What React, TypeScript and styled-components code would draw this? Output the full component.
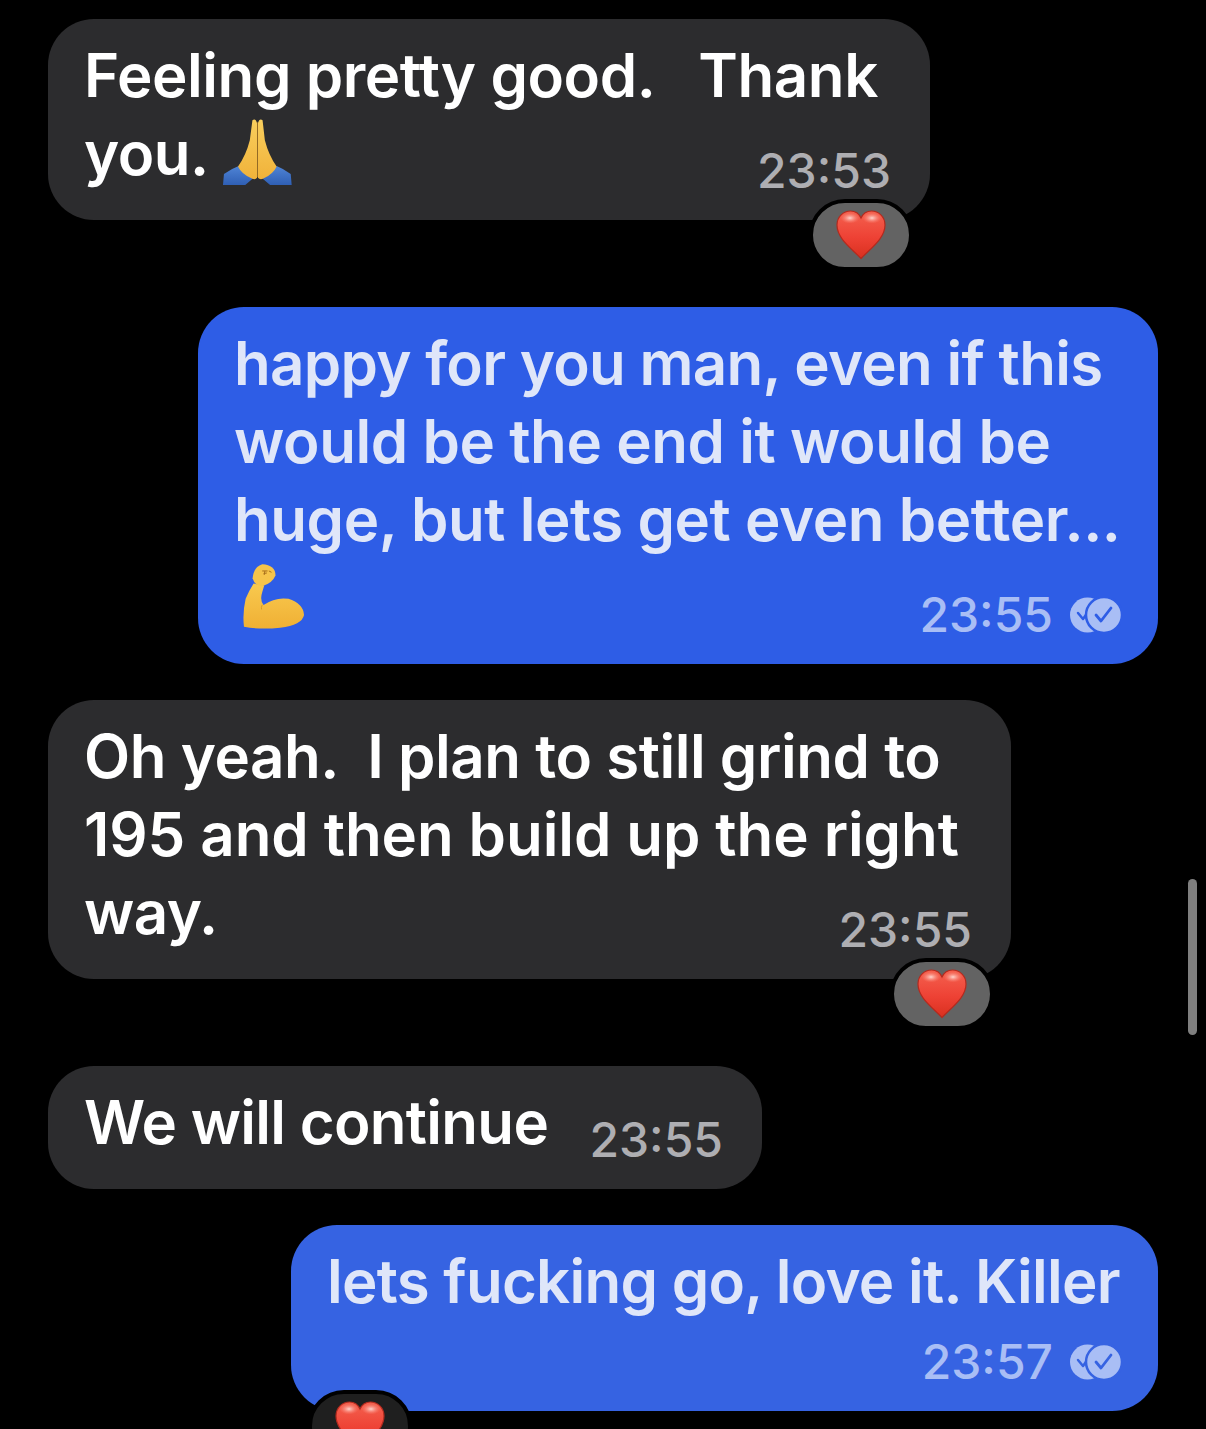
import React, { useId } from "react";
import styled, { createGlobalStyle } from "styled-components";

const Global = createGlobalStyle`
  html, body { margin: 0; padding: 0; background: #000; }
  body { width: 1206px; height: 1429px; overflow: hidden; }
`;

const Page = styled.main`
  position: relative;
  box-sizing: border-box;
  width: 1206px;
  height: 1429px;
  overflow: hidden;
  padding: 19px 48px 0;
  display: flex;
  flex-direction: column;
  background: #000;
  font-family: Inter, "Liberation Sans", sans-serif;
`;

const Bubble = styled.div<{ $w: number; $out?: boolean; $bg?: string; $gap: number }>`
  position: relative;
  box-sizing: border-box;
  width: ${(p) => p.$w}px;
  align-self: ${(p) => (p.$out ? "flex-end" : "flex-start")};
  margin-bottom: ${(p) => p.$gap}px;
  padding: 17px 37px 28px 36px;
  border-radius: 46px;
  background: ${(p) => p.$bg ?? "#2c2c2e"};
  color: ${(p) => (p.$out ? "#dfe6f9" : "#ffffff")};
  font-size: 60px;
  font-weight: 600;
  letter-spacing: -0.5px;
  line-height: 78px;
  white-space: pre;
`;

const Line = styled.div<{ $track?: number }>`
  letter-spacing: ${(p) => p.$track ?? -0.5}px;
`;

const LastRow = styled.div<{ $h?: number }>`
  display: flex;
  align-items: flex-end;
  justify-content: space-between;
  height: ${(p) => p.$h ?? 78}px;
`;

const Lead = styled.div`
  display: flex;
  align-items: flex-start;
  align-self: flex-start;
`;

const Stamp = styled.div`
  display: flex;
  align-items: center;
  margin-bottom: -3px;
  margin-right: -1px;
  gap: 17px;
`;

const Time = styled.span<{ $out?: boolean }>`
  font-size: 48px;
  font-weight: 500;
  letter-spacing: 0;
  line-height: 48px;
  color: ${(p) => (p.$out ? "#a9bef5" : "#aeaeb2")};
  margin-right: ${(p) => (p.$out ? 0 : 3)}px;
`;

const Reaction = styled.div<{ $left?: number; $dim?: boolean }>`
  position: absolute;
  ${(p) => (p.$left !== undefined ? `left: ${p.$left}px;` : "right: 17px;")}
  bottom: -51px;
  width: 96px;
  height: 64px;
  display: flex;
  align-items: center;
  justify-content: center;
  border: 4px solid #000;
  border-radius: 36px;
  background: ${(p) => (p.$dim ? "#1f1f1f" : "#636363")};
`;

const Scrollbar = styled.div`
  position: absolute;
  left: 1188px;
  top: 879px;
  width: 9px;
  height: 156px;
  border-radius: 5px;
  background: #7f7f7f;
`;

const EmojiBox = styled.svg<{ $ml: number; $mt: number }>`
  display: block;
  flex: none;
  margin-left: ${(p) => p.$ml}px;
  margin-top: ${(p) => p.$mt}px;
`;

function Heart() {
  const id = useId();
  return (
    <svg width="50" height="50" viewBox="0 0 50 50">
      <defs>
        <linearGradient id={id + "r"} x1="0" y1="0" x2="0" y2="1">
          <stop offset="0" stopColor="#f4614f" />
          <stop offset="0.55" stopColor="#ee4235" />
          <stop offset="1" stopColor="#d9301f" />
        </linearGradient>
        <radialGradient id={id + "s"}>
          <stop offset="0" stopColor="#ffdcd6" stopOpacity="0.95" />
          <stop offset="1" stopColor="#ff8a7a" stopOpacity="0" />
        </radialGradient>
      </defs>
      <path
        d="M25 48.5C15 38 1 28.5 1 15C1 6.5 7.500 1 14.500 1C19 1 23 3.500 25 8C27 3.500 31 1 35.500 1C42.500 1 49 6.500 49 15C49 28.500 35 38 25 48.500Z"
        fill={`url(#${id}r)`}
        stroke="#b32a1e"
        strokeWidth="1.2"
      />
      <ellipse cx="14" cy="8" rx="9.500" ry="5.500" fill={`url(#${id}s)`} />
      <ellipse cx="36" cy="8" rx="9.500" ry="5.500" fill={`url(#${id}s)`} />
    </svg>
  );
}

function Pray() {
  const id = useId();
  return (
    <EmojiBox $ml={13} $mt={3} width="71" height="70" viewBox="65 56 217 210">
      <defs>
        <linearGradient id={id + "h"} x1="0" y1="0" x2="0" y2="1">
          <stop offset="0" stopColor="#f9cf5d" />
          <stop offset="1" stopColor="#f0b23a" />
        </linearGradient>
        <linearGradient id={id + "b"} x1="0" y1="0" x2="0" y2="1">
          <stop offset="0" stopColor="#4f84d6" />
          <stop offset="1" stopColor="#2f5fb4" />
        </linearGradient>
      </defs>
      <path d="M68 262L71 228Q95 212 116 204Q126 226 162 240L136 262Z" fill={`url(#${id}b)`} />
      <path d="M278 262L275 228Q252 212 232 204Q216 226 186 240L212 262Z" fill={`url(#${id}b)`} />
      <path d="M172 240L172 72Q167 56 158 64L150 125Q138 172 114 205Q124 228 158 243Q168 246 172 240Z" fill={`url(#${id}h)`} />
      <path d="M175 240L175 72Q180 56 189 64L196 125Q208 172 232 205Q222 228 190 243Q180 246 175 240Z" fill={`url(#${id}h)`} />
      <path d="M173.500 70L173.500 238" stroke="#c98a1f" strokeWidth="2" />
    </EmojiBox>
  );
}

function Flex() {
  const id = useId();
  return (
    <EmojiBox $ml={8} $mt={5} width="63" height="67" viewBox="125 38 190 202">
      <defs>
        <linearGradient id={id + "f"} x1="0" y1="0" x2="0" y2="1">
          <stop offset="0" stopColor="#f8c94f" />
          <stop offset="1" stopColor="#f0b034" />
        </linearGradient>
      </defs>
      <path
        d="M131 230Q126 190 136 146Q146 122 160 100L192 106L186 126Q178 150 190 165Q225 140 265 146Q310 160 312 195Q306 226 240 233Q180 240 131 230Z"
        fill={`url(#${id}f)`}
      />
      <path d="M157 84Q160 50 186 42Q226 44 226 76Q216 100 186 108Q164 108 157 84Z" fill="#f6c44a" />
      <path d="M186 62L202 62M194 62L192 74M206 62L214 66M190 70L200 68" stroke="#a8701c" strokeWidth="3" fill="none" />
      <path d="M184 178Q182 172 186 164" stroke="#d99a25" strokeWidth="3" fill="none" />
    </EmojiBox>
  );
}

function Ticks({ bg }: { bg: string }) {
  const c = "#a9bef5";
  return (
    <svg width="52" height="36" viewBox="0 0 52 36">
      <circle cx="17.500" cy="18" r="17.500" fill={c} />
      <path d="M8 16L13 22L18 15" stroke={bg} strokeWidth="2.500" fill="none" strokeLinecap="round" strokeLinejoin="round" />
      <circle cx="34" cy="18" r="18" fill={c} stroke={bg} strokeWidth="2.500" />
      <path d="M26 18L31 24L41 11" stroke={bg} strokeWidth="2.800" fill="none" strokeLinecap="round" strokeLinejoin="round" />
    </svg>
  );
}

export default function App() {
  const blueA = "#2e5de6";
  const blueB = "#3663e2";
  return (
    <Page>
      <Global />
      <Bubble $w={882} $gap={87}>
        <Line $track={-0.42}>Feeling pretty good.   Thank</Line>
        <LastRow>
          <Lead>
            <span>you.</span>
            <Pray />
          </Lead>
          <Stamp>
            <Time>23:53</Time>
          </Stamp>
        </LastRow>
        <Reaction>
          <Heart />
        </Reaction>
      </Bubble>

      <Bubble $w={960} $out $bg={blueA} $gap={36}>
        <Line $track={-0.7}>happy for you man, even if this</Line>
        <Line $track={-0.42}>would be the end it would be</Line>
        <Line $track={-0.43}>huge, but lets get even better...</Line>
        <LastRow>
          <Lead>
            <Flex />
          </Lead>
          <Stamp>
            <Time $out>23:55</Time>
            <Ticks bg={blueA} />
          </Stamp>
        </LastRow>
      </Bubble>

      <Bubble $w={963} $gap={87}>
        <Line $track={-0.44}>Oh yeah.  I plan to still grind to</Line>
        <Line $track={-0.08}>195 and then build up the right</Line>
        <LastRow>
          <span>way.</span>
          <Stamp>
            <Time>23:55</Time>
          </Stamp>
        </LastRow>
        <Reaction>
          <Heart />
        </Reaction>
      </Bubble>

      <Bubble $w={714} $gap={36}>
        <LastRow>
          <Line $track={-0.7}>We will continue</Line>
          <Stamp>
            <Time>23:55</Time>
          </Stamp>
        </LastRow>
      </Bubble>

      <Bubble $w={867} $out $bg={blueB} $gap={0}>
        <Line $track={-0.73}>lets fucking go, love it. Killer</Line>
        <LastRow $h={63}>
          <span />
          <Stamp>
            <Time $out>23:57</Time>
            <Ticks bg={blueB} />
          </Stamp>
        </LastRow>
        <Reaction $left={17} $dim>
          <Heart />
        </Reaction>
      </Bubble>

      <Scrollbar />
    </Page>
  );
}
